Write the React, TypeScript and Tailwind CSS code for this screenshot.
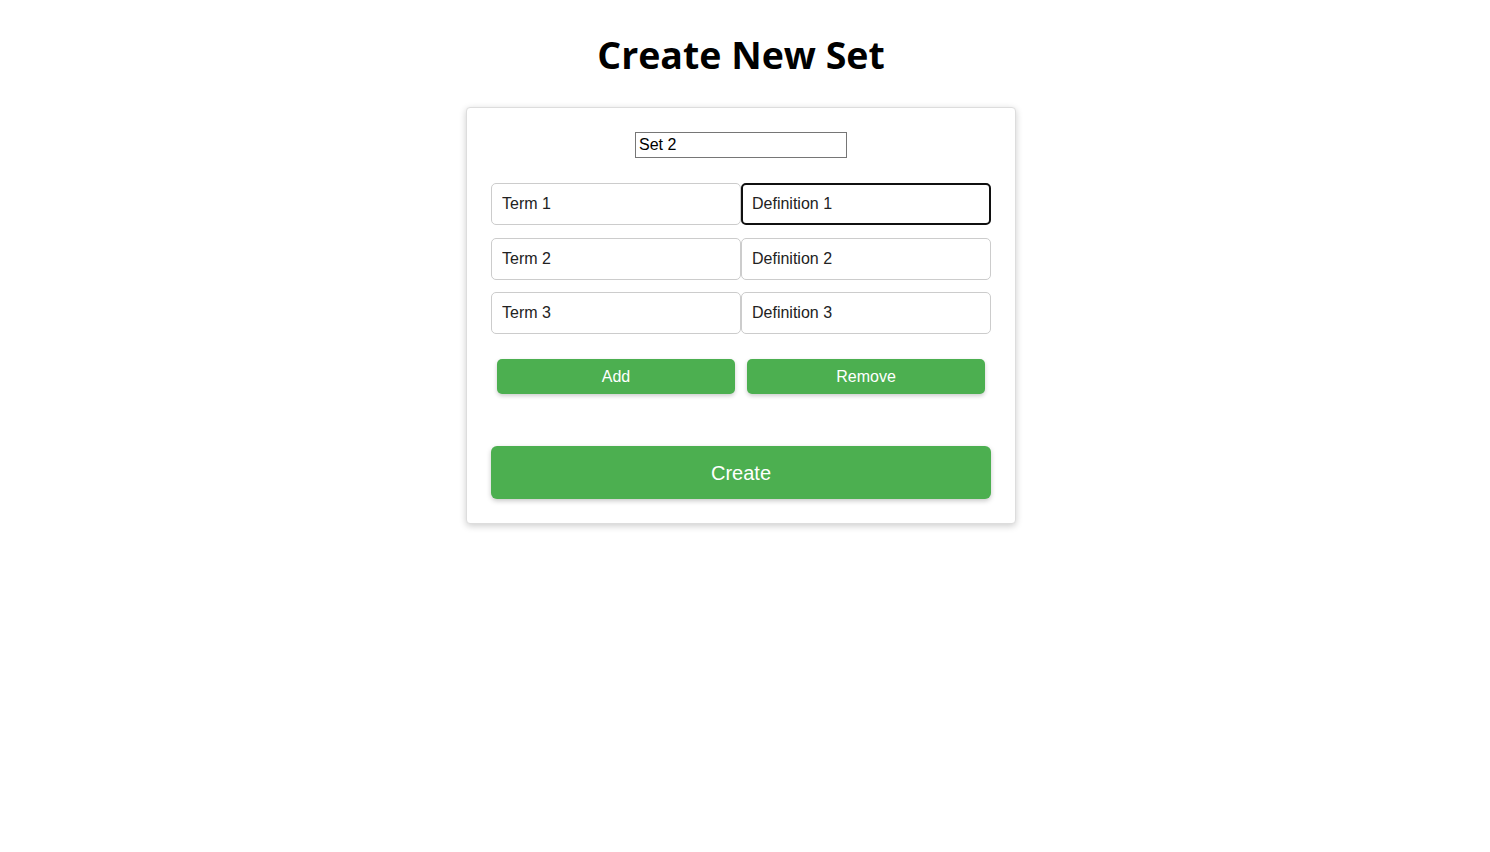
import React from "react";

const rows = [
  { term: "Term 1", def: "Definition 1" },
  { term: "Term 2", def: "Definition 2" },
  { term: "Term 3", def: "Definition 3" },
];

export default function App() {
  return (
    <div className="min-h-screen bg-white pr-[8px] font-['Liberation_Sans',Arial,sans-serif]">
      <h1 className="pt-[31px] text-center font-['Open_Sans',sans-serif] text-[37.5px] font-bold leading-[48px] text-black">
        Create New Set
      </h1>
      <div className="mx-auto mt-[28px] w-[550px] rounded-[4px] border border-[#ddd] bg-white px-[24px] pb-[24px] pt-[24px] shadow-[0_2px_7px_rgba(0,0,0,0.2)]">
        <div className="flex justify-center">
          <input
            defaultValue="Set 2"
            className="h-[26px] w-[212px] border border-[#767676] px-[3px] text-[16px] text-black outline-none"
          />
        </div>
        <div className="mt-[25px] flex flex-col gap-[12.5px]">
          {rows.map((r, i) => (
            <div key={i} className="flex">
              <input
                defaultValue={r.term}
                className="h-[42px] w-[250px] rounded-[5px] border border-[#ccc] px-[10px] text-[16px] text-[#222] outline-none"
              />
              <input
                defaultValue={r.def}
                className={
                  i === 0
                    ? "h-[42px] w-[250px] rounded-[5px] border-2 border-[#101010] px-[9px] text-[16px] text-[#222] outline-none"
                    : "h-[42px] w-[250px] rounded-[5px] border border-[#ccc] px-[10px] text-[16px] text-[#222] outline-none"
                }
              />
            </div>
          ))}
        </div>
        <div className="mt-[25px] flex">
          <div className="w-[250px] px-[6px]">
            <button className="h-[35px] w-full rounded-[5px] bg-[#4CAF50] text-[16px] text-white shadow-[0_2px_4px_rgba(0,0,0,0.2)]">
              Add
            </button>
          </div>
          <div className="w-[250px] px-[6px]">
            <button className="h-[35px] w-full rounded-[5px] bg-[#4CAF50] text-[16px] text-white shadow-[0_2px_4px_rgba(0,0,0,0.2)]">
              Remove
            </button>
          </div>
        </div>
        <button className="mt-[52px] h-[53px] w-full rounded-[6px] bg-[#4CAF50] text-[20px] text-white shadow-[0_2px_5px_rgba(0,0,0,0.22)]">
          Create
        </button>
      </div>
    </div>
  );
}
